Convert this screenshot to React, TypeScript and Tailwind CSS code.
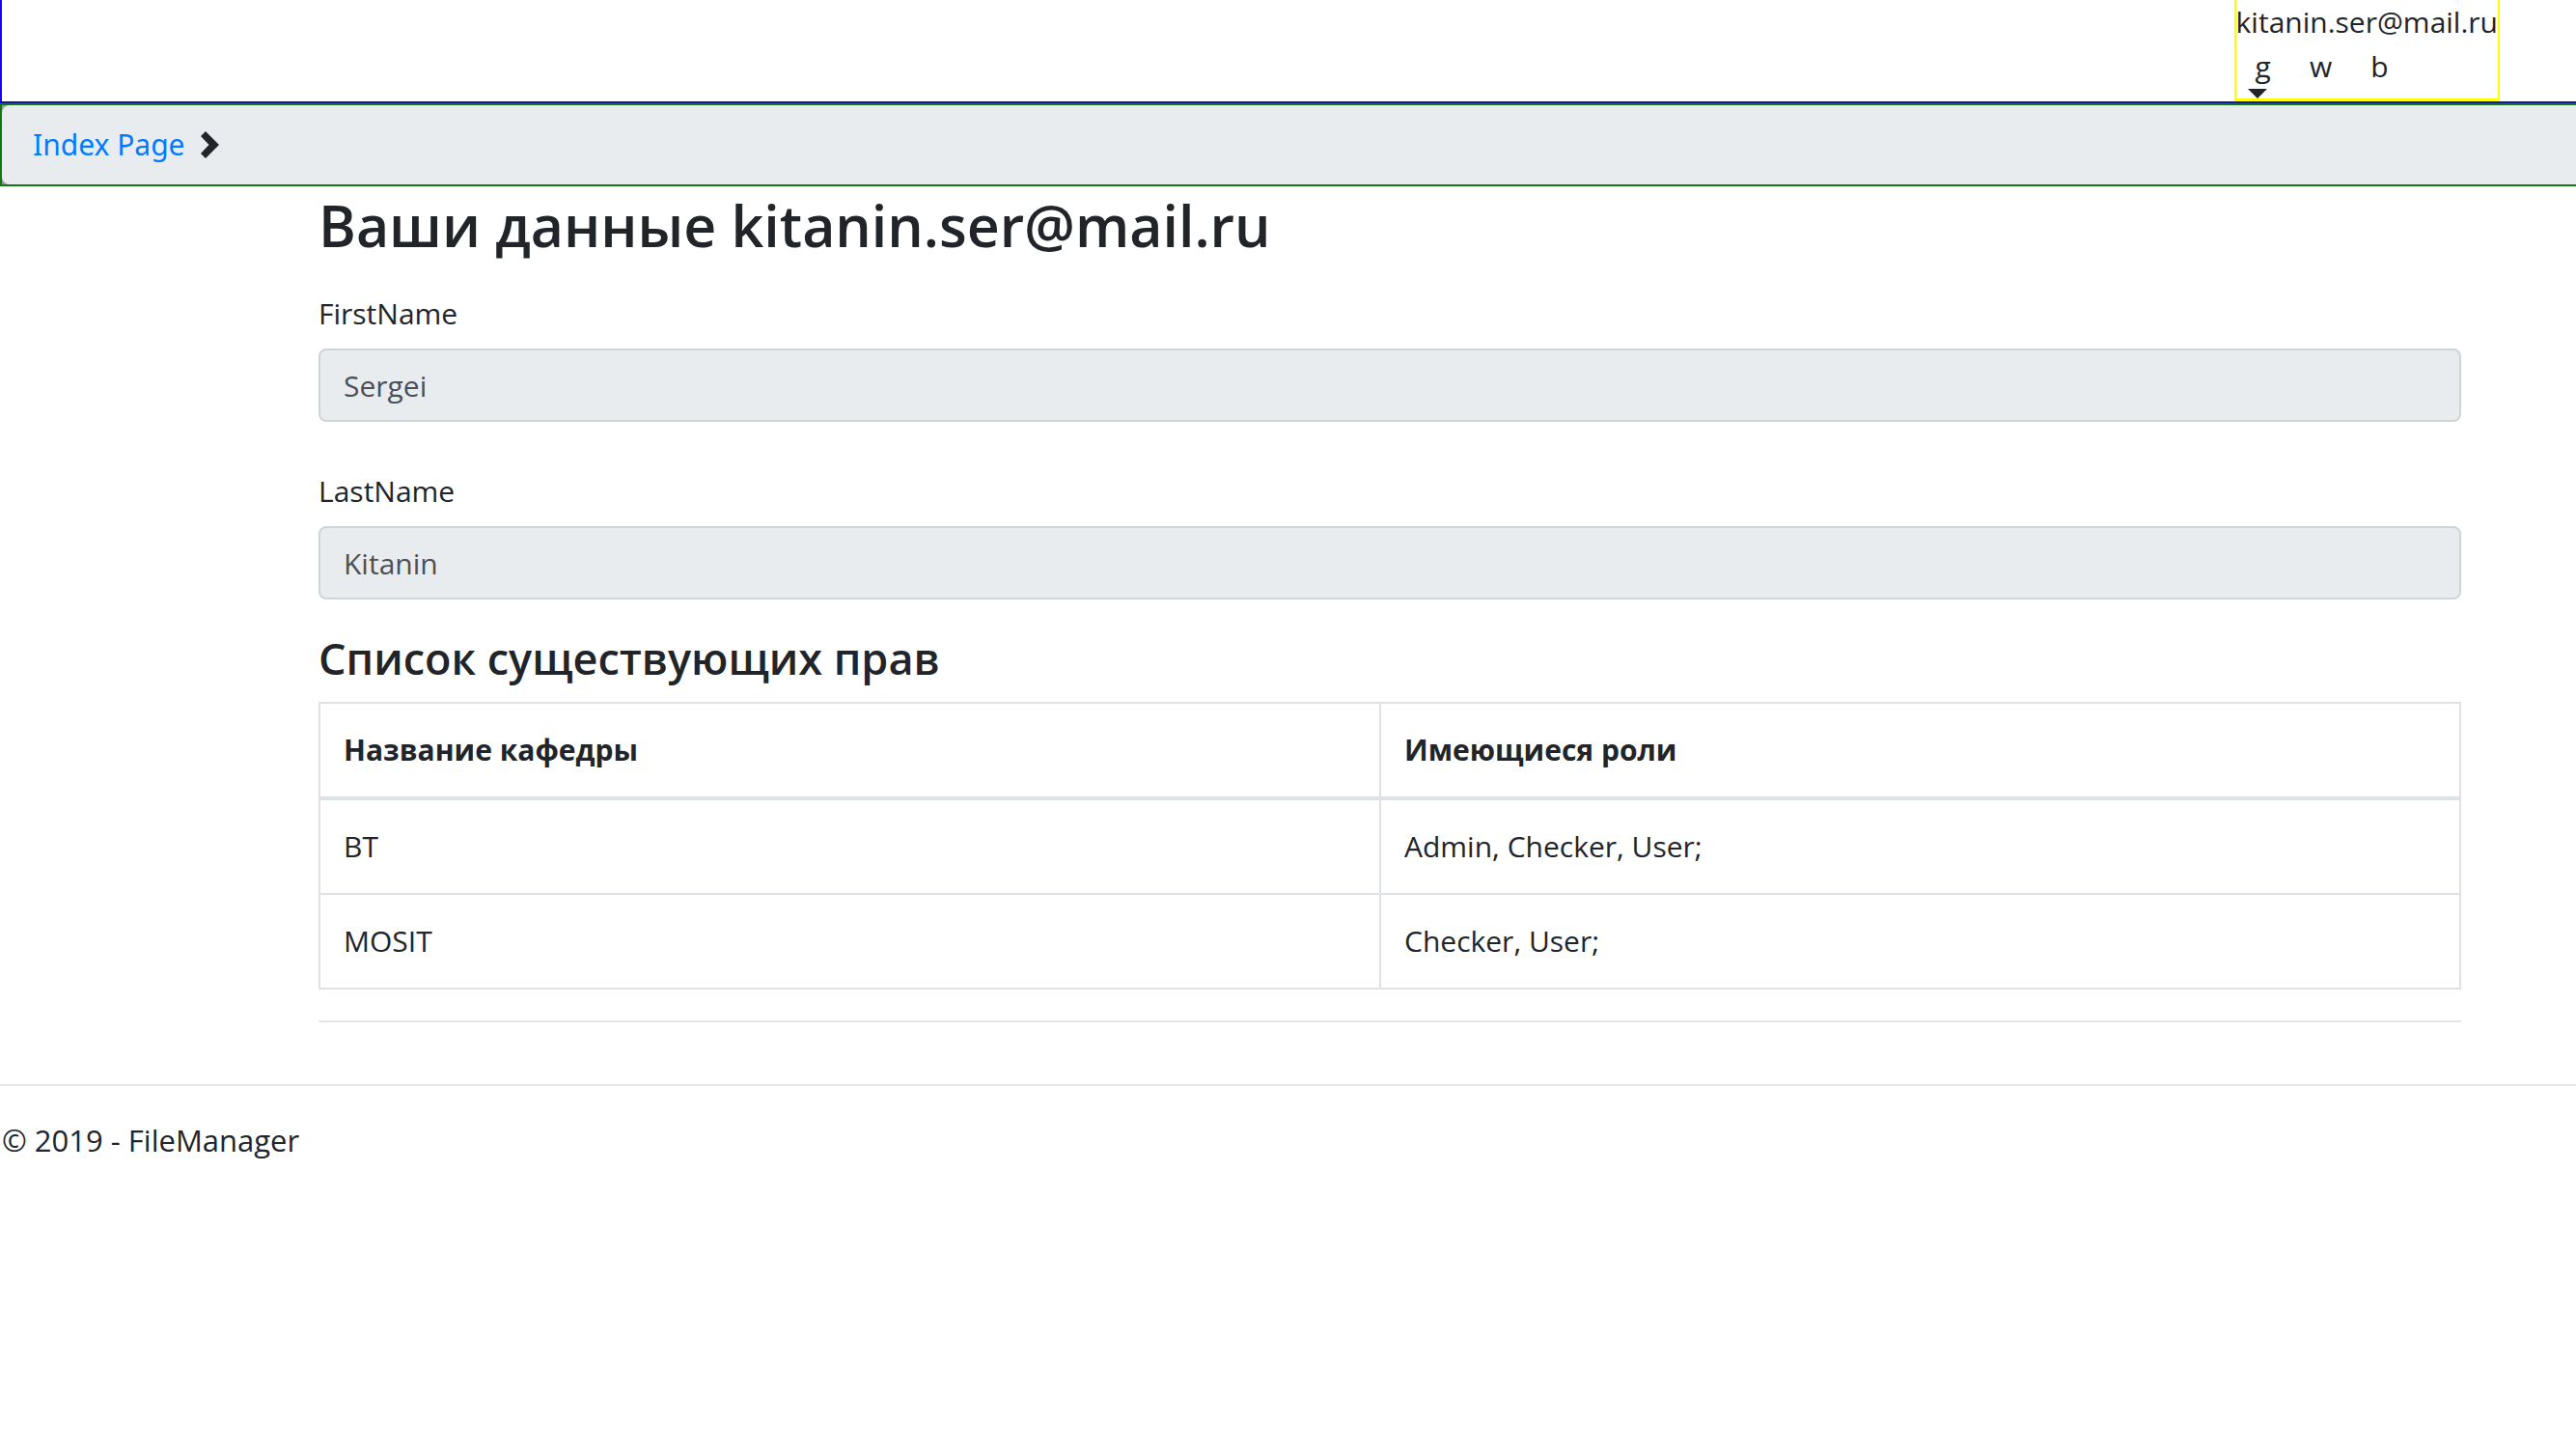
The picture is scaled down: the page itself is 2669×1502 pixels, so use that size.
const rights = [
  { department: 'BT', roles: 'Admin, Checker, User;' },
  { department: 'MOSIT', roles: 'Checker, User;' },
];

const cell = 'border-2 border-[#dee2e6] px-6 py-6 text-left';

function Field({ id, label, value }: { id: string; label: string; value: string }) {
  return (
    <div className="mb-8 flex flex-col gap-3 pt-4">
      <label htmlFor={id} className="leading-[48px]">
        {label}
      </label>
      <input
        id={id}
        type="text"
        disabled
        defaultValue={value}
        className="h-19 w-full rounded-lg border-2 border-[#ced4da] bg-[#e9ecef] px-6 text-[#495057]"
      />
    </div>
  );
}

export default function App() {
  return (
    <div className="min-h-screen bg-white font-['Open_Sans',sans-serif] text-[30px] leading-[48px] text-[#212529]">
      <header className="flex justify-end border-b-2 border-l-2 border-b-[#0d1a99] border-l-[#1a00ff] pr-[79px] leading-[46px]">
        <div className="border-x-2 border-b-3 border-[#ffff00]">
          <div>kitanin.ser@mail.ru</div>
          <div className="flex gap-10 pl-5">
            <button type="button">g</button>
            <button type="button">w</button>
            <button type="button">b</button>
          </div>
          <svg className="ml-3 block" width="20" height="10" viewBox="0 0 20 10" aria-hidden="true">
            <path d="M0 0h20L10 10z" fill="#212529" />
          </svg>
        </div>
      </header>

      <nav aria-label="Breadcrumb" className="border-y-2 border-l-2 border-[#0f7a14] bg-[#999999]">
        <div className="flex h-[82px] items-center gap-4 rounded-l-lg bg-[#e9ecef] pl-8">
          <a href="#" className="font-['Noto_Sans',sans-serif] text-[#007bff]">
            Index Page
          </a>
          <svg width="20" height="28" viewBox="0 0 20 28" aria-hidden="true">
            <path d="M5 0L19 14L5 28L0 23L8.500 14L0 5z" fill="#212529" />
          </svg>
        </div>
      </nav>

      <main className="pr-[119px] pl-[330px]">
        <h1 className="mb-3 text-[59px] leading-[80px] font-semibold">Ваши данные kitanin.ser@mail.ru</h1>
        <Field id="first-name" label="FirstName" value="Sergei" />
        <Field id="last-name" label="LastName" value="Kitanin" />
        <h2 className="mb-4 text-[45px] leading-[58px] font-semibold">Список существующих прав</h2>
        <table className="w-full border-collapse border-2 border-[#dee2e6]">
          <thead>
            <tr>
              <th className={`${cell} w-[1099px] border-b-4 font-bold`}>Название кафедры</th>
              <th className={`${cell} border-b-4 font-bold`}>Имеющиеся роли</th>
            </tr>
          </thead>
          <tbody>
            {rights.map((row) => (
              <tr key={row.department}>
                <td className={cell}>{row.department}</td>
                <td className={cell}>{row.roles}</td>
              </tr>
            ))}
          </tbody>
        </table>
        <hr className="mt-8 border-t-2 border-[#e5e5e5]" />
      </main>

      <footer className="mt-16 border-t-2 border-[#e5e5e5] pt-8">
        <p className="pl-0.5 text-[31px]">© 2019 - FileManager</p>
      </footer>
    </div>
  );
}
